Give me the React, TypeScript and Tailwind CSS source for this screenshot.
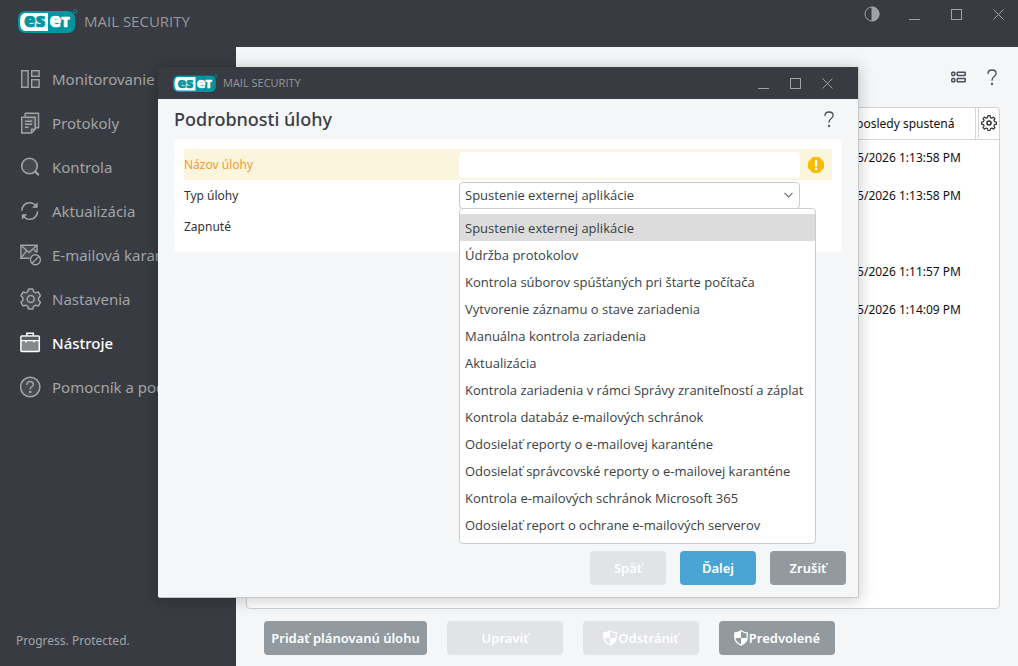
import React from "react";

type IconProps = { className?: string };

const MonitorIcon = () => (
  <svg width="22" height="22" viewBox="0 0 22 22" fill="#ffffff14" stroke="currentColor" strokeWidth="1.4">
    <rect x="1.7" y="2.7" width="6.4" height="16.6" />
    <rect x="11.7" y="2.7" width="7.4" height="5.6" />
    <rect x="11.7" y="11.7" width="7.4" height="7.6" />
  </svg>
);

const LogsIcon = () => (
  <svg width="22" height="22" viewBox="0 0 22 22" fill="none" stroke="currentColor" strokeWidth="1.4" strokeLinejoin="round">
    <path d="M5.2 5.2V1.200h13.400v14.600h-3" fill="#ffffff14" />
    <path d="M1.700 5.200h13.600v12l-3.800 3.800H1.700z" fill="#ffffff14" />
    <path d="M15.300 17.200h-3.800V21" />
    <path d="M5 9.300h7M5 12.300h7M5 15.300h3.500" />
  </svg>
);

const SearchIcon = () => (
  <svg width="22" height="22" viewBox="0 0 22 22" fill="none" stroke="currentColor" strokeWidth="1.600" strokeLinecap="round">
    <circle cx="9.500" cy="10" r="7.800" fill="#ffffff14" />
    <path d="M15.300 15.600l2.900 2.900" strokeWidth="2.200" />
  </svg>
);

const UpdateIcon = () => (
  <svg width="22" height="22" viewBox="0 0 22 22" fill="none" stroke="currentColor" strokeWidth="1.600">
    <path d="M1.800 10.600C2 5.800 5.400 2.700 9.500 2.700c2.700 0 4.900 1.100 6.300 3.200" />
    <path d="M17.600 2.200v5.600H12z" fill="currentColor" stroke="none" />
    <path d="M17.600 11.400c-.2 4.800-3.600 7.900-7.700 7.900-2.700 0-4.900-1.100-6.300-3.200" />
    <path d="M1.800 19.800v-5.600h5.600z" fill="currentColor" stroke="none" />
  </svg>
);

const QuarantineIcon = () => (
  <svg width="22" height="22" viewBox="0 0 22 22" fill="none" stroke="currentColor" strokeWidth="1.400">
    <path d="M9.500 14.300H.9V1.200h16.200v7" fill="#ffffff14" />
    <path d="M.9 1.200L9 8.500l8.100-7.300M.9 14.300l5.800-7.600M17 8.300l-3-2.400" />
    <circle cx="15.400" cy="15.800" r="5" />
    <path d="M12 19.200l6.800-6.800" />
  </svg>
);

const GearIcon = ({ className }: IconProps) => (
  <svg width="22" height="22" viewBox="0 0 22 22" fill="none" stroke="currentColor" strokeWidth="1.500" strokeLinejoin="round" className={className}>
    <path
      d="M8.600 1h4.200l.8 2.700 2 1.100 2.800-.7 2.100 3.700-1.900 2v2.400l1.900 2-2.100 3.700-2.800-.7-2 1.100-.8 2.700H8.600l-.8-2.700-2-1.100-2.800.7L.9 14.200l1.900-2V9.800l-1.900-2L3 4.100l2.800.7 2-1.100z"
      fill="#ffffff14"
    />
    <circle cx="10.700" cy="11" r="3.500" />
  </svg>
);

const ToolsIcon = () => (
  <svg width="22" height="22" viewBox="0 0 22 22" fill="none" stroke="currentColor" strokeWidth="1.500">
    <rect x=".9" y="4" width="18.400" height="15.600" rx="1" fill="#ffffff66" />
    <path d="M1.700 6.400h16.800" strokeWidth="3.200" stroke="#5a5d62" />
    <path d="M6.800 4V1.200h6.500V4" />
    <path d="M1 8.600h18.200" strokeWidth="1.200" />
    <path d="M6 9v1.600M14 9v1.600" />
  </svg>
);

const HelpIcon = () => (
  <svg width="22" height="22" viewBox="0 0 22 22" fill="none" stroke="currentColor" strokeWidth="1.500" strokeLinecap="round">
    <circle cx="10.200" cy="11" r="9.700" fill="#ffffff14" />
    <path d="M7 8.600C7 6.700 8.300 5.600 10.100 5.600s3.200 1.100 3.200 2.800c0 2.300-3.100 2.400-3.100 4.600" />
    <circle cx="10.200" cy="16" r=".6" fill="currentColor" />
  </svg>
);

const QuestionMark = () => (
  <svg width="12" height="17" viewBox="0 0 12 17" fill="none" stroke="#4a5058" strokeWidth="1.300" strokeLinecap="round">
    <path d="M2 4.600C2 2.300 3.600 1 6 1s4.100 1.400 4.100 3.500C10.100 7.500 6 7.700 6 11.200" />
    <circle cx="6" cy="15" r=".5" fill="#4a5058" />
  </svg>
);

const ShieldIcon = () => (
  <svg width="14" height="16" viewBox="0 0 14 16" className="-mt-[2px] shrink-0">
    <path d="M7 .8C5 2.200 3 2.800.8 2.900V7c0 4 2.600 6.600 6.200 8.200C10.600 13.600 13.200 11 13.200 7V2.900C11 2.800 9 2.200 7 .8z" fill="none" stroke="#fff" strokeWidth="1.300" />
    <path d="M7 1v7H1V3C3.500 2.800 5 2.200 7 1zM7 8h6c-.3 3.500-2.700 5.700-6 7z" fill="#fff" />
  </svg>
);

const Minimize = () => (
  <svg width="11" height="11" viewBox="0 0 11 11" stroke="currentColor"><path d="M0 10.500h11" /></svg>
);
const Maximize = () => (
  <svg width="11" height="11" viewBox="0 0 11 11" fill="none" stroke="currentColor"><rect x=".5" y=".5" width="10" height="10" /></svg>
);
const Close = () => (
  <svg width="11" height="11" viewBox="0 0 11 11" stroke="currentColor"><path d="M.5.5l10 10M10.500.5l-10 10" /></svg>
);

function Logo({ width, height }: { width: number; height: number }) {
  return (
    <svg width={width} height={height} viewBox="0 0 60 24" role="img" aria-label="eset" className="overflow-visible">
      <rect x="0" y="2" width="57" height="22" rx="7" fill="#0096a1" />
      <path d="M30 4H8C4 4 2 6.500 2 13s2 9 6 9h22z" fill="#fff" />
      <circle cx="57" cy="2.300" r="1.700" fill="none" stroke="#0096a1" strokeWidth=".9" />
      <g fontFamily="'Open Sans', sans-serif" fontWeight="800" fontSize="19" strokeWidth=".7">
        <text x="6" y="18.300" fill="#0096a1" stroke="#0096a1">es</text>
        <text x="31.500" y="18.300" fill="#fff" stroke="#fff">e<tspan fontSize="14.500">T</tspan></text>
      </g>
    </svg>
  );
}

const menu = [
  { label: "Monitorovanie", icon: <MonitorIcon /> },
  { label: "Protokoly", icon: <LogsIcon /> },
  { label: "Kontrola", icon: <SearchIcon /> },
  { label: "Aktualizácia", icon: <UpdateIcon /> },
  { label: "E-mailová karanténa", icon: <QuarantineIcon /> },
  { label: "Nastavenia", icon: <GearIcon /> },
  { label: "Nástroje", icon: <ToolsIcon />, active: true },
  { label: "Pomocník a podpora", icon: <HelpIcon /> },
];

const runs = ["1/15/2026 1:13:58 PM", "1/15/2026 1:13:58 PM", "", "1/15/2026 1:11:57 PM", "1/15/2026 1:14:09 PM"];

const taskTypes = [
  "Spustenie externej aplikácie",
  "Údržba protokolov",
  "Kontrola súborov spúšťaných pri štarte počítača",
  "Vytvorenie záznamu o stave zariadenia",
  "Manuálna kontrola zariadenia",
  "Aktualizácia",
  "Kontrola zariadenia v rámci Správy zraniteľností a záplat",
  "Kontrola databáz e-mailových schránok",
  "Odosielať reporty o e-mailovej karanténe",
  "Odosielať správcovské reporty o e-mailovej karanténe",
  "Kontrola e-mailových schránok Microsoft 365",
  "Odosielať report o ochrane e-mailových serverov",
];

const buttonBase = "flex h-[34px] items-center justify-center rounded pt-[2px] text-[13px] font-semibold whitespace-nowrap text-white ";
const windowButton = "flex h-4 w-8 items-center justify-center";

function Dialog() {
  return (
    <section role="dialog" aria-labelledby="dialog-title" className="absolute top-[67px] right-[160px] bottom-[69px] left-[158px] flex flex-col bg-[#f5f6f8] shadow-[1px_1px_0_0_#c6c8ca,0_2px_14px_2px_#00000030]">
      <header className="flex h-8 shrink-0 items-center justify-between bg-[#383b41] pr-[15px] pl-[15px]">
        <div className="flex items-center gap-[5px]">
          <Logo width={45} height={18} />
          <span className="font-['Open_Sans',sans-serif] text-[11px] text-[#96999d]">MAIL SECURITY</span>
        </div>
        <div className="flex text-[#a0a2a5]">
          <button aria-label="Minimalizovať" className={windowButton}><Minimize /></button>
          <button aria-label="Maximalizovať" className={windowButton}><Maximize /></button>
          <button aria-label="Zavrieť" className={windowButton}><Close /></button>
        </div>
      </header>
      <div className="flex h-10 shrink-0 items-center justify-between pr-[23px] pl-4">
        <h1 id="dialog-title" className="text-[18px] font-medium text-[#3a3e45]">Podrobnosti úlohy</h1>
        <button aria-label="Pomocník"><QuestionMark /></button>
      </div>
      <div className="mx-4 rounded bg-white px-[10px] py-[10px] text-[12px] text-[#2f343b]">
        <div className="flex h-[31px] items-center bg-[#fcf5dd]">
          <label htmlFor="task-name" className="w-[275px] text-[#f39a2e]">Názov úlohy</label>
          <input id="task-name" className="h-[26px] flex-1 rounded bg-white px-[6px] outline-none" />
          <span className="flex w-8 justify-center">
            <svg width="16" height="16" viewBox="0 0 16 16" role="img" aria-label="Upozornenie">
              <path d="M5 0h6l5 5v6l-5 5H5l-5-5V5z" fill="#fdbb00" />
              <path d="M8 3.800v5" stroke="#fff" strokeWidth="2.200" strokeLinecap="round" />
              <circle cx="8" cy="12" r="1.300" fill="#fff" />
            </svg>
          </span>
        </div>
        <div className="flex h-[31px] items-center">
          <label htmlFor="task-type" className="w-[275px]">Typ úlohy</label>
          <div className="relative mr-8 flex-1 font-['Open_Sans',sans-serif] text-[13px] text-[#3a3e45]">
            <select id="task-type" className="block h-[27px] w-full appearance-none rounded border border-[#cbcccd] bg-white px-[5px] pt-px outline-none">
              <option>{taskTypes[0]}</option>
            </select>
            <svg width="9" height="6" viewBox="0 0 9 6" fill="none" stroke="#6b7076" strokeWidth="1.200" className="pointer-events-none absolute top-[10px] right-[7px]">
              <path d="M.5.8l4 4 4-4" />
            </svg>
            <ul role="listbox" aria-label="Typ úlohy" className="absolute top-[26px] left-0 z-10 w-[357px] rounded border border-[#cbcccd] bg-white py-[5px]">
              {taskTypes.map((t, i) => (
                <li key={t} role="option" aria-selected={i === 0} className={"h-[27px] px-[5px] leading-[28px] whitespace-nowrap " + (i === 0 ? "bg-[#dcdcdc]" : "")}>
                  {t}
                </li>
              ))}
            </ul>
          </div>
        </div>
        <div className="flex h-[31px] items-center">Zapnuté</div>
      </div>
      <footer className="mt-auto flex justify-end gap-[14px] p-3">
        <button disabled className={buttonBase + "w-[76px] bg-[#e1e3e6]"}>Späť</button>
        <button className={buttonBase + "w-[76px] bg-[#4aa5d5]"}>Ďalej</button>
        <button className={buttonBase + "w-[76px] bg-[#92999f]"}>Zrušiť</button>
      </footer>
    </section>
  );
}

export default function App() {
  return (
    <div className="relative flex h-screen flex-col overflow-hidden bg-[#f5f6f8] font-['Noto_Sans',sans-serif]">
      <header className="flex h-[47px] shrink-0 items-start justify-between bg-[#383b41] pr-1 pl-[18px]">
        <div className="flex items-center gap-[6px] pt-[9px]">
          <Logo width={60} height={24} />
          <span className="font-['Open_Sans',sans-serif] text-[15px] text-[#96999d]">MAIL SECURITY</span>
        </div>
        <div className="flex gap-[10px] pt-[6px] text-[#a0a2a5]">
          <button aria-label="Motív" className={windowButton}>
            <svg width="16" height="16" viewBox="0 0 16 16" fill="none" stroke="currentColor">
              <circle cx="8" cy="8" r="7" />
              <path d="M8 1a7 7 0 010 14z" fill="currentColor" />
            </svg>
          </button>
          <button aria-label="Minimalizovať" className={windowButton}><Minimize /></button>
          <button aria-label="Maximalizovať" className={windowButton}><Maximize /></button>
          <button aria-label="Zavrieť" className={windowButton}><Close /></button>
        </div>
      </header>
      <div className="flex min-h-0 flex-1">
        <aside className="flex w-[236px] shrink-0 flex-col justify-between bg-[#383b41] pt-[10px] pb-4">
          <nav>
            {menu.map((m) => (
              <a key={m.label} href="#" className={"flex h-11 items-center gap-[10px] pl-5 text-[15px] whitespace-nowrap " + (m.active ? "font-medium text-white" : "text-[#a3a4a6]")}>
                {m.icon}
                {m.label}
              </a>
            ))}
          </nav>
          <p className="pl-4 text-[12px] text-[#a3a4a6]">Progress. Protected.</p>
        </aside>
        <main className="flex min-w-0 flex-1 flex-col">
          <div className="flex h-[60px] shrink-0 items-center justify-end gap-5 pr-5">
            <button aria-label="Zobrazenie">
              <svg width="15" height="12" viewBox="0 0 15 12" fill="none" stroke="#4a5058" strokeWidth="1.500">
                <rect x=".8" y="1.200" width="3" height="3.200" rx=".8" />
                <rect x="6.200" y="1.200" width="8" height="3.200" rx=".5" />
                <rect x=".8" y="7.600" width="3" height="3.200" rx=".8" />
                <rect x="6.200" y="7.600" width="8" height="3.200" rx=".5" />
              </svg>
            </button>
            <button aria-label="Pomocník"><QuestionMark /></button>
          </div>
          <div className="mr-[18px] ml-[10px] flex-1 overflow-hidden rounded border border-[#cfd0d1] bg-white">
            <table className="w-full border-collapse text-left text-[12px] text-[#111]">
              <thead>
                <tr className="h-[31px] border-b border-[#d5d6d7]">
                  <th className="flex h-[30px] items-center justify-end pt-[2px] pr-5 font-normal">Naposledy spustená</th>
                  <th className="w-6 border-l border-[#d5d6d7] pl-[2px]">
                    <button aria-label="Nastavenia stĺpcov" className="flex h-[30px] w-full items-center justify-center border-l border-[#d5d6d7]">
                      <svg width="16" height="16" viewBox="0 0 16 16" fill="none" stroke="#333" strokeWidth="1.200" strokeLinejoin="round">
                        <path d="M6.900.7h2.200l.4 1.900 1.400.6 1.600-1.100 1.500 1.500-1.100 1.600.6 1.400 1.900.4v2.200l-1.900.4-.6 1.400 1.100 1.600-1.500 1.500-1.600-1.100-1.400.6-.4 1.900H6.900l-.4-1.900-1.400-.6-1.600 1.100L2 12.600 3.100 11l-.6-1.400-1.900-.4V7l1.900-.4.6-1.400L2 3.600l1.500-1.500 1.600 1.100 1.400-.6z" />
                        <circle cx="8" cy="8" r="2" strokeWidth="1.600" />
                      </svg>
                    </button>
                  </th>
                </tr>
              </thead>
              <tbody>
                {runs.map((r, i) => (
                  <tr key={i} className="h-[38px]">
                    <td className="pr-[14px] text-right">{r}</td>
                    <td />
                  </tr>
                ))}
              </tbody>
            </table>
          </div>
          <footer className="flex shrink-0 gap-5 pt-3 pb-[11px] pl-7">
            <button className={buttonBase + "w-[163px] bg-[#92999f]"}>Pridať plánovanú úlohu</button>
            <button disabled className={buttonBase + "w-[116px] bg-[#e1e3e6]"}>Upraviť</button>
            <button disabled className={buttonBase + "w-[116px] gap-px bg-[#e1e3e6]"}><ShieldIcon />Odstrániť</button>
            <button className={buttonBase + "w-[116px] gap-px bg-[#92999f]"}><ShieldIcon />Predvolené</button>
          </footer>
        </main>
      </div>
      <Dialog />
    </div>
  );
}
